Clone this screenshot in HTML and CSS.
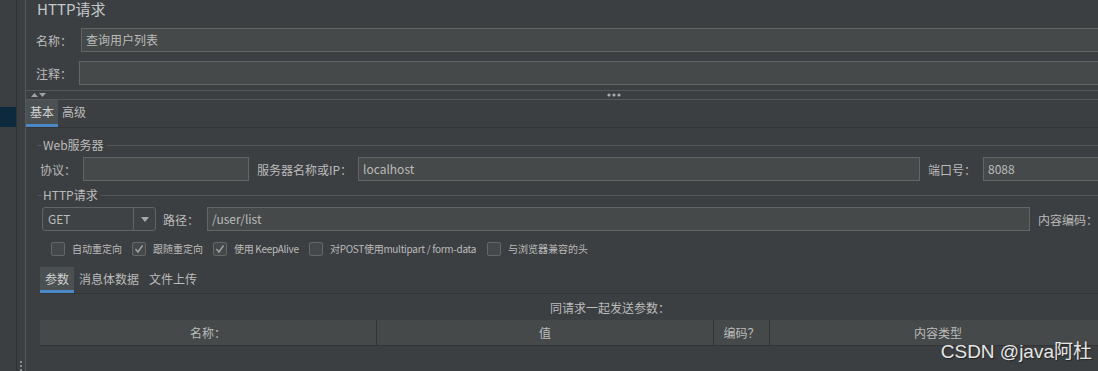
FILE: index.html
```html
<!DOCTYPE html>
<html lang="zh-CN">
<head>
	<meta charset="UTF-8">
	<meta name="viewport" content="width=device-width, initial-scale=1.0">
	<title>HTTP请求</title>
	<link rel="stylesheet" href="styles.css">
</head>
<body>

<div class="app">
	<!-- tree on the left, only the selected row shows -->
	<aside class="tree">
		<div class="tree-item selected"></div>
	</aside>
	<div class="divider">
		<svg class="grip" width="3" height="11" viewBox="0 0 3 11"><rect x="0" y="0" width="2" height="2" fill="#8a8d8f"/><rect x="0" y="4" width="2" height="2" fill="#8a8d8f"/><rect x="0" y="8" width="2" height="2" fill="#8a8d8f"/></svg>
	</div>

	<main class="panel">
		<div class="head">
			<h1 class="title">HTTP请求</h1>
			<div class="row name-row">
				<label class="lbl w45">名称：</label>
				<div class="field grow">查询用户列表</div>
			</div>
			<div class="row comment-row">
				<label class="lbl w43">注释：</label>
				<div class="field grow"></div>
			</div>
		</div>

		<div class="splitter">
			<svg class="arrows" width="16" height="6" viewBox="0 0 16 6"><polygon points="0,5 3.5,1 7,5" fill="#a0a0a0"/><polygon points="8,1 15,1 11.5,5" fill="#a0a0a0"/></svg>
			<svg class="dots" width="14" height="4" viewBox="0 0 14 4"><circle cx="2" cy="2" r="1.6" fill="#a8a8a8"/><circle cx="7" cy="2" r="1.6" fill="#a8a8a8"/><circle cx="12" cy="2" r="1.6" fill="#a8a8a8"/></svg>
		</div>

		<div class="tabs">
			<span class="tab active">基本</span>
			<span class="tab">高级</span>
		</div>

		<div class="tab-body">
			<section class="group">
				<div class="group-title"><span>Web服务器</span></div>
				<div class="row server-row">
					<label class="lbl w43">协议：</label>
					<div class="field w166"></div>
					<label class="lbl w101 ml8">服务器名称或IP：</label>
					<div class="field w562">localhost</div>
					<label class="lbl w55 ml8">端口号：</label>
					<div class="field grow">8088</div>
				</div>
			</section>

			<section class="group http-group">
				<div class="group-title"><span>HTTP请求</span></div>
				<div class="row request-row">
					<div class="combo">
						<span class="combo-value">GET</span>
						<span class="combo-btn"><svg width="8" height="5" viewBox="0 0 8 5"><polygon points="0,0 8,0 4,5" fill="#a9a9a9"/></svg></span>
					</div>
					<label class="lbl w44 ml7">路径：</label>
					<div class="field w823">/user/list</div>
					<label class="lbl ml8">内容编码：</label>
					<div class="field grow"></div>
				</div>

				<div class="checks">
					<div class="check"><span class="box"></span><span>自动重定向</span></div>
					<div class="check"><span class="box"><svg width="12" height="12" viewBox="0 0 12 12"><polyline points="2.5,6 5,9 9.5,2.5" fill="none" stroke="#a2a2a2" stroke-width="1.4"/></svg></span><span>跟随重定向</span></div>
					<div class="check"><span class="box"><svg width="12" height="12" viewBox="0 0 12 12"><polyline points="2.5,6 5,9 9.5,2.5" fill="none" stroke="#a2a2a2" stroke-width="1.4"/></svg></span><span class="tight">使用 KeepAlive</span></div>
					<div class="check"><span class="box"></span><span class="tight">对POST使用multipart / form-data</span></div>
					<div class="check"><span class="box"></span><span>与浏览器兼容的头</span></div>
				</div>
			</section>

			<div class="tabs sub-tabs">
				<span class="tab active">参数</span>
				<span class="tab">消息体数据</span>
				<span class="tab">文件上传</span>
			</div>

			<p class="caption">同请求一起发送参数：</p>

			<div class="table-head">
				<span>名称：</span>
				<span>值</span>
				<span>编码？</span>
				<span>内容类型</span>
				<span></span>
			</div>
		</div>
	</main>
</div>

<div class="watermark">CSDN @java阿杜</div>

</body>
</html>
```

FILE: styles.css
```css
* {
	margin: 0;
	padding: 0;
	box-sizing: border-box;
}

body {
	background-color: #3c3f41;
	color: #bbbbbb;
	font-family: "Noto Sans CJK SC", "Liberation Sans", sans-serif;
	font-size: 12px;
	overflow: hidden;
}

.app {
	display: flex;
	width: 1200px;
	height: 371px;
}

/*tree + divider*/
.tree {
	width: 17px;
	border-right: 1px solid #2f3132;
	padding-top: 107px;
}

.tree-item.selected {
	height: 20px;
	background-color: #0d293e;
}

.divider {
	width: 9px;
	border-right: 1px solid #56595b;
	display: flex;
	flex-direction: column;
	justify-content: flex-end;
	align-items: center;
}

.grip {
	margin-bottom: -1px;
}

/*main panel*/
.panel {
	flex: 1;
	display: flex;
	flex-direction: column;
}

.head {
	padding: 0 10px;
}

.title {
	font-size: 15px;
	font-weight: normal;
	line-height: 17px;
	height: 17px;
	margin-left: 1px;
	color: #c4c8cc;
}

.row {
	display: flex;
	align-items: center;
	height: 24px;
}

.name-row {
	margin-top: 11px;
}

.comment-row {
	margin-top: 9px;
}

.lbl {
	flex: none;
	white-space: nowrap;
}

.w43 { width: 43px; }
.w44 { width: 44px; }
.w45 { width: 45px; }
.w55 { width: 55px; }
.w101 { width: 101px; }
.ml7 { margin-left: 7px; }
.ml8 { margin-left: 8px; }

.field {
	height: 24px;
	line-height: 22px;
	border: 1px solid #646464;
	background-color: #45494a;
	padding-left: 4px;
	color: #bbbbbb;
	flex: none;
}

.field.grow {
	flex: 1;
}

.w166 { width: 166px; }
.w562 { width: 562px; }
.w823 { width: 823px; }

/*splitter with arrows*/
.splitter {
	margin-top: 5px;
	height: 10px;
	border-top: 1px solid #55585a;
	border-bottom: 1px solid #55585a;
	display: flex;
	align-items: center;
	padding-left: 5px;
}

.dots {
	margin-left: 560px;
}

/*tabs*/
.tabs {
	display: flex;
	height: 28px;
	border-bottom: 1px solid #323435;
}

.tab {
	height: 27px;
	padding: 0 4px;
	line-height: 24px;
	border-bottom: 3px solid transparent;
	color: #bbbbbb;
}

.tab.active {
	background-color: #4b5052;
	border-bottom-color: #4a88c7;
	color: #d0d0d0;
}

.tab-body {
	padding: 10px 20px 0 12px;
}

/*titled groups*/
.group-title {
	display: flex;
	align-items: center;
	height: 14px;
}

.group-title::before {
	content: "";
	width: 4px;
	height: 1px;
	background-color: #55585a;
}

.group-title::after {
	content: "";
	flex: 1;
	height: 1px;
	background-color: #55585a;
}

.group-title span {
	margin: 0 3px 0 1px;
	line-height: 14px;
}

.server-row {
	margin-top: 5px;
	padding-left: 2px;
}

.http-group {
	margin-top: 7px;
}

.request-row {
	margin-top: 5px;
	padding-left: 4px;
}

.combo {
	display: flex;
	width: 114px;
	height: 24px;
	border: 1px solid #646464;
	border-radius: 3px;
	background-color: #3e4244;
	flex: none;
}

.combo-value {
	flex: 1;
	padding-left: 5px;
	line-height: 22px;
}

.combo-btn {
	width: 22px;
	border-left: 1px solid #646464;
	display: flex;
	align-items: center;
	justify-content: center;
}

/*checkbox row*/
.checks {
	display: flex;
	margin-top: 11px;
	padding-left: 13px;
	height: 14px;
	font-size: 10px;
	line-height: 14px;
}

.check {
	display: flex;
	align-items: center;
	white-space: nowrap;
	flex: none;
}

.check:nth-child(1),
.check:nth-child(2) { width: 81px; }
.check:nth-child(3) { width: 96px; }
.check:nth-child(4) { width: 178px; }

.tight {
	letter-spacing: -0.3px;
}

.box {
	width: 14px;
	height: 14px;
	border: 1px solid #666;
	border-radius: 2px;
	background-color: #43494a;
	margin-right: 7px;
	display: flex;
	align-items: center;
	justify-content: center;
	flex: none;
}

/*parameter tabs + table*/
.sub-tabs {
	margin-top: 11px;
	margin-left: 2px;
	height: 27px;
}

.sub-tabs .tab {
	height: 26px;
	padding: 0 5px;
	line-height: 23px;
}

.caption {
	text-align: center;
	height: 26px;
	line-height: 27px;
	margin-left: 2px;
}

.table-head {
	display: grid;
	grid-template-columns: 337px 337px 56px 337px 1fr;
	margin-left: 2px;
	height: 26px;
	background-color: #45494a;
	border-bottom: 1px solid #323435;
}

.table-head span {
	text-align: center;
	line-height: 25px;
	border-right: 1px solid #323435;
}

/*csdn watermark on top*/
.watermark {
	position: absolute;
	top: 340px;
	right: 6px;
	font-family: "Liberation Sans", "Noto Sans CJK SC", sans-serif;
	font-size: 19px;
	line-height: 24px;
	color: #e6e6e6;
	text-shadow: 1px 1px 1px rgba(0, 0, 0, 0.45);
}
```
